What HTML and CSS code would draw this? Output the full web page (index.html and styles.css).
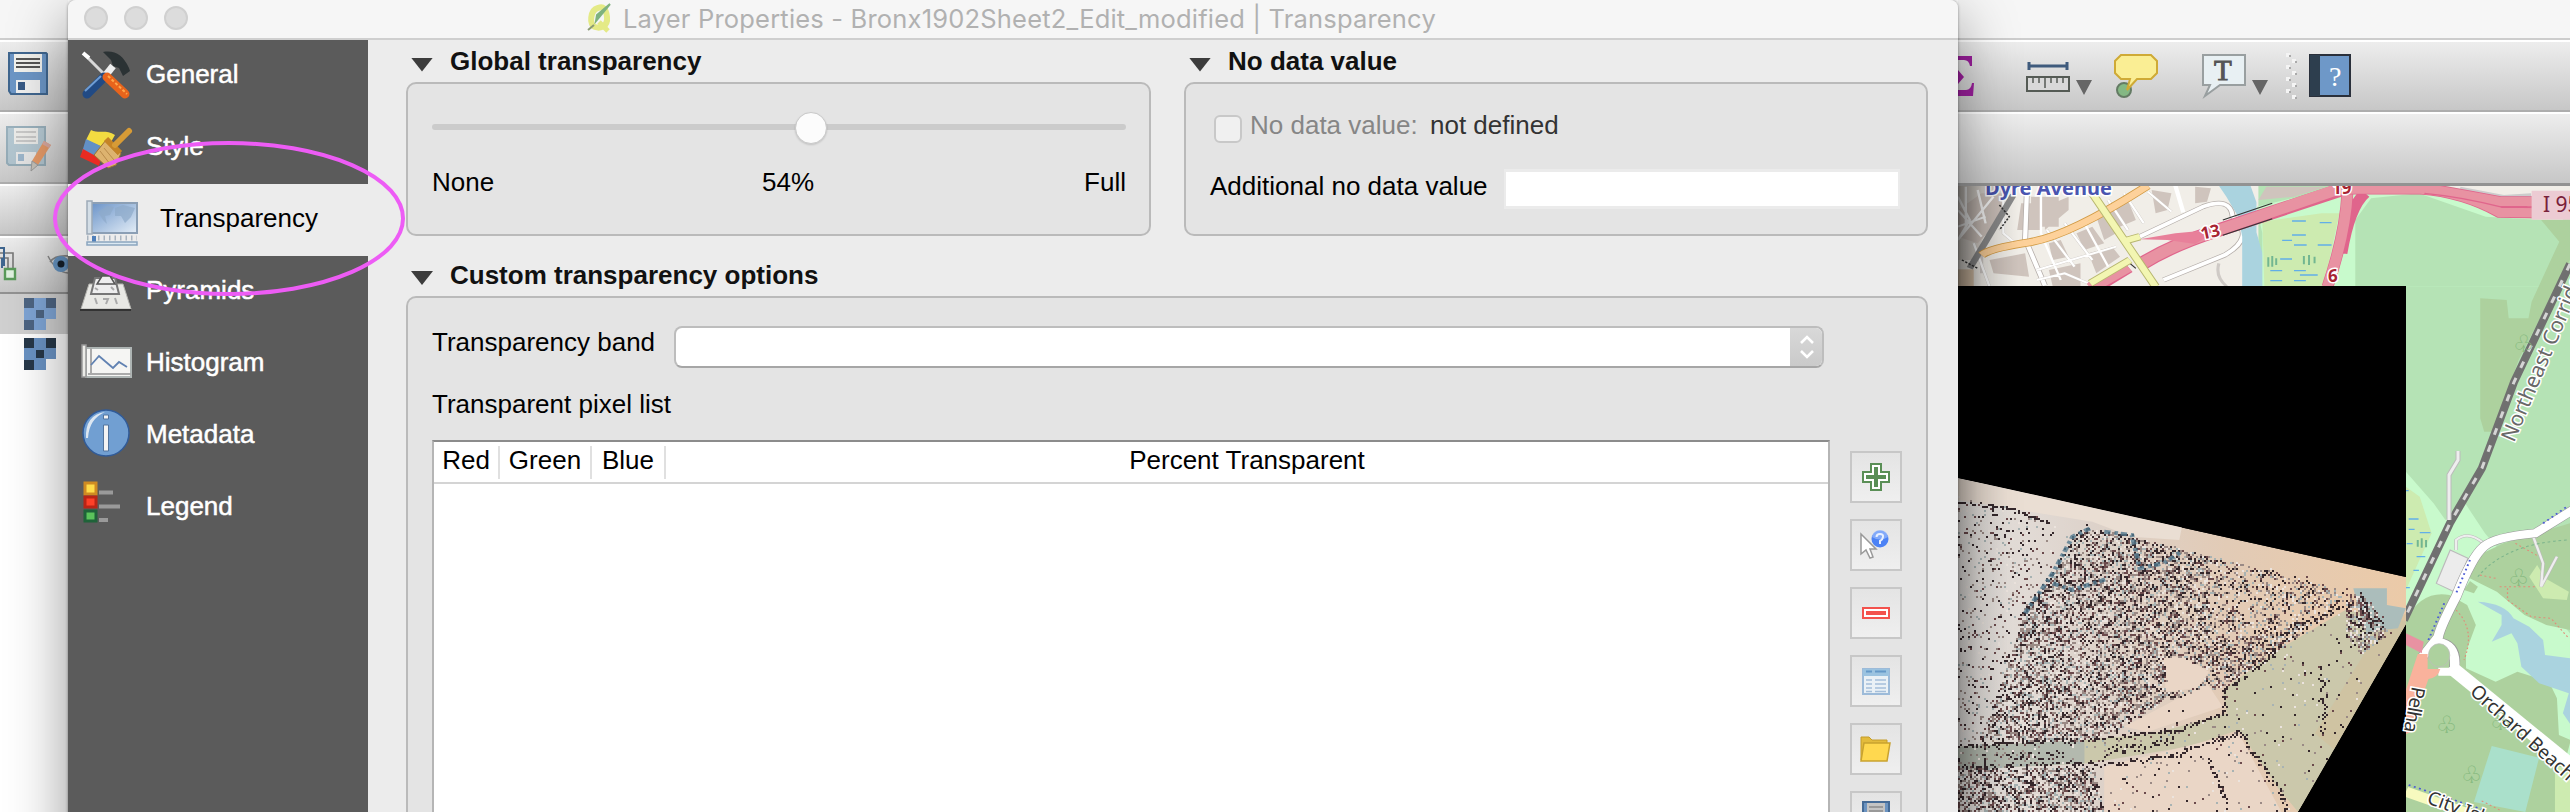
FILE: index.html
```html
<!DOCTYPE html>
<html lang="en">
<head>
<meta charset="utf-8">
<title>Layer Properties</title>
<link rel="stylesheet" href="styles.css">
</head>
<body>
<div class="desktop">
  <div class="main-left">
    <div class="strip-title"></div>
    <div class="bar">
      <svg width="68" height="70" viewBox="0 42 68 70"><path d="M9 53h37l1 1v40H11l-2-3z" fill="#6c96c6" stroke="#40668f" stroke-width="2"/><path d="M14 54h28v18H14z" fill="#f2f2ee"/><path d="M16 59h24M16 63h24M16 67h24" stroke="#555" stroke-width="2"/><path d="M16 80h24v13H16z" fill="#f0f0f0"/><path d="M18 82h7v8h-7z" fill="#385a86"/></svg>
    </div>
    <div class="bar">
      <svg width="68" height="70" viewBox="0 114 68 70"><g opacity=".65"><path d="M7 127h38v38H9l-2-2z" fill="#9fbccb" stroke="#7396a8" stroke-width="2"/><path d="M14 128h24v16H14z" fill="#f2f2ee"/><path d="M16 132h20M16 137h20M16 141h20" stroke="#aaa" stroke-width="1.5"/><path d="M16 152h20v12H16z" fill="#eee"/><path d="M18 154h6v7h-6z" fill="#7fa5c5"/></g><path d="M44 141l7 4-13 20-6-4z" fill="#e59a68"/><path d="M44 141l7 4-2 3-7-4z" fill="#d9a9a0"/><path d="M32 161l6 4-7 6z" fill="#c5c0b8" stroke="#999"/></svg>
    </div>
    <div class="bar bar-short"></div>
    <div class="bar bar-tree">
      <svg width="68" height="54" viewBox="0 238 68 54"><path d="M-4 258h12v11M0 253h13v16" fill="none" stroke="#777" stroke-width="1.6"/><path d="M-2 248h6v18M2 258v10" fill="none" stroke="#40668f" stroke-width="2"/><path d="M5 269h10v10H5z" fill="#dff0df" stroke="#5a9a5a" stroke-width="2.4"/><path d="M48 256q8 16 20 17M50 262q5-7 18-6" fill="#e5e5e5" stroke="#888" stroke-width="1.5"/><circle cx="61" cy="264" r="8" fill="#6796c4"/><circle cx="61" cy="264" r="3.5" fill="#15202c"/></svg>
    </div>
    <div class="layer selected"><svg width="32" height="32" viewBox="0 0 32 32"><path fill="#7fa5d5" d="M0 0h32v21H22v11H0z"/><path fill="#4e6583" d="M0 0h10v10H0zM22 0h10v10H22zM12 12h8v8h-8zM0 22h10v10H0z"/></svg></div>
    <div class="layer"><svg width="32" height="32" viewBox="0 0 32 32"><path fill="#6a93c4" d="M0 0h32v21H22v11H0z"/><path fill="#273849" d="M0 0h10v10H0zM22 0h10v10H22zM12 12h8v8h-8zM0 22h10v10H0z"/></svg></div>
  </div>

  <div class="dialog">
    <div class="titlebar">
      <i class="light"></i><i class="light"></i><i class="light"></i>
      <div class="title">
        <svg width="28" height="32" viewBox="0 0 28 32"><path d="M13 6C5 8 4 23 10 25s13-1 12-10S18 4 13 6z" fill="none" stroke="#e4ea86" stroke-width="6"/><path d="M14 20l9 9" stroke="#e4ea86" stroke-width="5"/><path d="M25 2L11 19l1-6z" fill="#7fb27f" stroke="#7fb27f" stroke-width="2"/><path d="M3 28l6-5" stroke="#8b9b75" stroke-width="2"/></svg>
        <span>Layer Properties - Bronx1902Sheet2_Edit_modified | Transparency</span>
      </div>
    </div>
    <div class="body">
      <div class="sidebar">
        <div class="item"><svg viewBox="0 0 72 72"><path d="M17 15l22 22" stroke="#d8d8d8" stroke-width="3"/><path d="M15 13l6 5" stroke="#fff" stroke-width="4"/><path d="M45 26L37 36" stroke="#eee" stroke-width="7"/><path d="M35 12c12-2 20 3 26 16l1 3-7 5-4-8-6-2-2-6z" fill="#2b3234"/><path d="M19 54L36 37" stroke="#214a84" stroke-width="9" stroke-linecap="round"/><path d="M17 51L33 36" stroke="#6f9dd4" stroke-width="2"/><path d="M39 37l18 17" stroke="#e8641c" stroke-width="9" stroke-linecap="round"/><path d="M40 36l19 18" stroke="#ffa74a" stroke-width="2" stroke-dasharray="3 2"/></svg><span>General</span></div>
        <div class="item"><svg viewBox="0 0 72 72"><path d="M23 18c8 4 15-1 24 5l-8 14-21-9z" fill="#f3dc41"/><path d="M18 27l19 9-7 13-16-9z" fill="#6290c5"/><path d="M15 37l18 10-2 7-19-9z" fill="#e92b22"/><path d="M38 28l15 13-5 12-8 3-14-13z" fill="#ddb36f" stroke="#9b7333"/><path d="M36 36l10 12M32 39l10 13M39 31l11 12" stroke="#b98b4a" stroke-width="1"/><path d="M38 27l14 14" stroke="#c58325" stroke-width="6"/><path d="M47 33L61 19" stroke="#d79b36" stroke-width="6" stroke-linecap="round"/></svg><span>Style</span></div>
        <div class="item active"><svg viewBox="0 0 72 72"><defs><linearGradient id="sky" x1="0" y1="0" x2="1" y2="1"><stop offset="0" stop-color="#6a93c8"/><stop offset="1" stop-color="#e4eef7"/></linearGradient></defs><path d="M23 19h46v30H23z" fill="url(#sky)" stroke="#8b9fb5" stroke-width="2"/><path d="M19 17h5v33h-5z" fill="#d4dee6" stroke="#9dabb8" stroke-width="1.5"/><path d="M30 28l9-6 7 1-4 8-5 1 2 8-4-4zM47 24l8-3 12 3-4 9-6 6-4-7-6 0z" fill="#8da9c9" opacity=".7"/><path d="M19 54h50" stroke="#a9b4bf" stroke-width="5" stroke-dasharray="1.5 4"/><path d="M24 52h4v7h-4z" fill="#4f7fb9"/><path d="M19 58h50v3H19z" fill="#dce9f2" stroke="#8ba5bf" stroke-width="1.5"/></svg><span>Transparency</span></div>
        <div class="item"><svg viewBox="0 0 72 72"><path d="M21 28h34l8 25H13z" fill="#e9e9e5" stroke="#b5b5b0"/><path d="M27 22h20l4 16H23z" fill="#eee" stroke="#777" stroke-width="2"/><path d="M34 20h8l5 8H29z" fill="#eee" stroke="#555" stroke-width="1.5"/><path d="M27 42l2 6M35 43h5l-2 5M47 42l2 6M27 32l3 2M43 31l3 3" fill="none" stroke="#aaa" stroke-width="2"/><path d="M12 54h51" stroke="#333" stroke-width="2"/></svg><span>Pyramids</span></div>
        <div class="item"><svg viewBox="0 0 72 72"><path d="M18 20h45v29H18z" fill="#f5f5f3" stroke="#aeb5b4" stroke-width="2"/><path d="M14 17h4v32h-4z" fill="#ecece8" stroke="#999" stroke-width="1.5"/><path d="M20 46h43M23 20v26" stroke="#aaa" stroke-width="2"/><path d="M23 37l8-9 7 6 7 6 6-6 8 5" fill="none" stroke="#6182b2" stroke-width="1.8"/></svg><span>Histogram</span></div>
        <div class="item"><svg viewBox="0 0 72 72"><circle cx="38" cy="33" r="23" fill="#719fd2" stroke="#315b98" stroke-width="1.5"/><path d="M18 38Q17 15 37 12q-16 7-17 26z" fill="#dde7f1"/><path d="M35.500 15h5v4h-5zM35.500 25h5v26h-5z" fill="#f3f3f3" stroke="#52749e"/></svg><span>Metadata</span></div>
        <div class="item"><svg viewBox="0 0 72 72"><path d="M17 11h11v11H17z" fill="#ffdc49" stroke="#cf8b22" stroke-width="3"/><path d="M17 25h11v10H17z" fill="#ff4028" stroke="#ba2416" stroke-width="3"/><path d="M17 39h11v10H17z" fill="#5bc45b" stroke="#1f6339" stroke-width="3"/><path d="M31 20.500h14M31 34.500h21M31 48h9" stroke="#9a9a9a" stroke-width="4"/></svg><span>Legend</span></div>
      </div>
      <div class="content">
        <div class="top-row">
          <section class="global">
            <h2><i class="tri"></i>Global transparency</h2>
            <div class="group">
              <div class="track"><i class="knob"></i></div>
              <div class="labels"><span>None</span><span class="pct">54%</span><span>Full</span></div>
            </div>
          </section>
          <section class="nodata">
            <h2><i class="tri"></i>No data value</h2>
            <div class="group">
              <div class="check-row"><i class="check"></i><span class="dim">No data value:</span><span class="def">not defined</span></div>
              <div class="add-row"><span>Additional no data value</span><i class="field"></i></div>
            </div>
          </section>
        </div>
        <section class="custom">
          <h2><i class="tri"></i>Custom transparency options</h2>
          <div class="group">
            <div class="band"><span>Transparency band</span>
              <div class="combo"><svg width="34" height="42" viewBox="0 0 34 42"><path d="M11 17l6-6 6 6M11 25l6 6 6-6" fill="none" stroke="#fff" stroke-width="2.600"/></svg></div>
            </div>
            <div class="list-label">Transparent pixel list</div>
            <div class="list-row">
              <div class="table">
                <div class="thead"><span class="c1">Red</span><span class="c2">Green</span><span class="c3">Blue</span><span class="c4">Percent Transparent</span></div>
              </div>
              <div class="tools">
                <div class="tool"><svg viewBox="0 0 48 48"><path d="M19 11h10v8h8v10h-8v8H19v-8h-8V19h8z" fill="#fff" stroke="#5a8f56" stroke-width="2"/><path d="M24 14v20M14 24h20" stroke="#5a8f56" stroke-width="4"/></svg></div>
                <div class="tool"><svg viewBox="0 0 48 48"><circle cx="28" cy="18" r="8.500" fill="#4c82f5"/><path d="M20 16a8 7 0 0 1 16 0q-8 5-16 0z" fill="#a9c4fb" opacity=".6"/><path d="M24.500 16q0-3 3.500-3t3 3-3 4v3" fill="none" stroke="#e8f0ff" stroke-width="2"/><path d="M9 13v20l5-4 4 8 3-1-3-8h6z" fill="#fff" stroke="#999" stroke-width="1.500"/></svg></div>
                <div class="tool"><svg viewBox="0 0 48 48"><path d="M11 19h26v10H11z" fill="#fff" stroke="#f3524d" stroke-width="2"/><path d="M14 24h20" stroke="#f3524d" stroke-width="4"/></svg></div>
                <div class="tool"><svg viewBox="0 0 48 48"><path d="M11 12h26v25H11z" fill="#eaf1f6" stroke="#9dbbd9" stroke-width="2"/><path d="M11 12h26v7H11z" fill="#9bc3e0"/><path d="M14 14.500h6M23 14.500h11" stroke="#6599c8" stroke-width="2"/><path d="M14 23h6M23 23h11M14 27h6M23 27h11M14 31h6M23 31h11M14 34.500h6M23 34.500h11" stroke="#a5bfda" stroke-width="1.600"/></svg></div>
                <div class="tool"><svg viewBox="0 0 48 48"><path d="M9 35V12h8l3 3h15v20z" fill="#e3bb3c" stroke="#c49c2a"/><path d="M12 18h26l-3 18H9z" fill="#ffd84f" stroke="#c9a22f" stroke-width="1.500"/></svg></div>
                <div class="tool"><svg viewBox="0 0 48 48"><path d="M11 9h26v28H11z" fill="#6b93c0" stroke="#456b96" stroke-width="2"/><path d="M15 10h18v12H15z" fill="#c4c4c4"/><path d="M17 14h14M17 18h14" stroke="#999" stroke-width="2"/></svg></div>
              </div>
            </div>
          </div>
        </section>
      </div>
    </div>
  </div>

  <div class="main-right">
    <div class="strip-title"></div>
    <div class="bar">
      <svg width="612" height="70" viewBox="1958 42 612 70">
        <path d="M1958 56h14v10h-2q-1-6-6-6h-6zM1958 70l6 7-6 7zM1958 90h8q5 0 6-7h2l-1 13h-15z" fill="#9b1f9c"/>
        <path d="M2029 66h38M2029 62v8M2067 62v8" stroke="#3f5b7d" stroke-width="3"/><path d="M2027 77h42v14h-42z" fill="#d9d9d9" stroke="#555b55" stroke-width="2"/><path d="M2033 78v5M2039 78v5M2045 78v10M2051 78v5M2057 78v5M2063 78v5" stroke="#555b55" stroke-width="1.500"/>
        <path d="M2076 80h16l-8 15zM2252 80h16l-8 15z" fill="#666"/>
        <circle cx="2124" cy="90" r="7" fill="#84b884" stroke="#647b64" stroke-width="2"/><path d="M2121 55h30l6 6v12l-6 6h-14l-10 11 3-11h-9l-6-6V61z" fill="#faee94" stroke="#cfaa36" stroke-width="2"/>
        <path d="M2203 55h42v30h-25l-15 11 5-11h-7z" fill="#e8f0f3" stroke="#999fa0" stroke-width="2"/><text x="2214" y="80" class="serif-t">T</text>
        <path d="M2288 53v46M2294 59v40" stroke="#f4f4f4" stroke-width="4" stroke-dasharray="4 8"/><path d="M2290 55v44M2296 61v38" stroke="#aaa" stroke-width="2" stroke-dasharray="2 10"/>
        <path d="M2310 55h40v41h-40z" fill="#6e98c8" stroke="#2a303b" stroke-width="2"/><path d="M2310 55h10v41h-10z" fill="#2d3e4e"/><text x="2329" y="86" class="serif-q">?</text>
      </svg>
    </div>
    <div class="bar bar-last"></div>
    <svg class="map" width="612" height="626" viewBox="0 0 612 626">
      <rect width="612" height="626" fill="#b5e3b5"/>
      <!-- street grid and parkway, north side -->
      <g transform="matrix(.3954 0 0 .3333 -8 -6)">
        <path d="M20 17H780V320H20z" fill="#f1eee8"/>
        <path d="M20 17h120L60 240H20z" fill="#dad4cd"/>
        <path d="M80 40l60 0-20 90-50 60-50-20V90zM180 70h50v80h-60zM205 50h70v90h-70zM100 240l90-20 10 70-90-10zM240 80l60-30v40l-60 60zM250 190l30-10 20 50-40 10zM320 160l40-20 30 50-50 20zM400 80l50-20 20 60-60 30zM510 30l50 10-10 50-30 10zM250 270l80-20v70h-70zM350 220l60-20 20 30-60 50zM370 110l30 0 20 50-30 20zM620 20l40 5-10 40-30 5zM800 20h150l-80 30-90 10z" fill="#cfc4bd"/>
        <g fill="none" stroke="#b5aeaa" stroke-width="15"><path d="M195 17l-5 160 50 140M480 170l160-90q70-30 75 30 60 60-20 115L540 300"/></g>
        <g fill="none" stroke="#fff" stroke-width="11"><path d="M195 17l-5 160 50 140M480 170l160-90q70-30 75 30 60 60-20 115L540 300M570 17l20 80"/></g>
        <g fill="none" stroke="#cfcac6" stroke-width="8"><path d="M135 40v120l30 30M245 150l70 110M290 130l70 110M400 60l50 90M440 40l50 90M500 35l60 60M60 190l40 130M220 270l200-70M220 300l70-20 60 30M80 280V220M680 250q-10 40 20 70"/></g>
        <g fill="none" stroke="#fff" stroke-width="6"><path d="M135 40v120l30 30M230 40v120l50 140M245 150l70 110M290 130l70 110M20 180l90-130M20 90l60 80M70 30l20 100M20 50l30 70-30 60M40 20v120M20 140l70-30M320 17l40 30M400 60l50 90M440 40l50 90M500 35l60 60M60 190l40 130M220 270l200-70M220 300l70-20 60 30M340 130l60 130"/></g>
        <path d="M20 268h40v52H20z" fill="#dfc9af"/>
        <path d="M160 45L50 265" stroke="#8c8c8c" stroke-width="17"/><path d="M125 75l25 35-25 40M30 240l40 25" fill="none" stroke="#333" stroke-width="4" stroke-dasharray="6 4"/>
        <path d="M80 225q20-20 120-38T500 17" fill="none" stroke="#d19a43" stroke-width="24"/><path d="M80 225q20-20 120-38T500 17" fill="none" stroke="#fdd19a" stroke-width="19"/>
        <path d="M680 17h80l15 50 0 90 20 83V320h-56V170l-10-60-30-60z" fill="#aad3df"/>
        <path d="M775 80L1000 17h250l300 60v243H790V160z" fill="#c8facc"/>
        <path d="M790 125l150-25h45l-40 220H795z" fill="#cdebb0"/>
        <g stroke="#62aee8" stroke-width="4"><path d="M865 123h35M935 128h30M865 165h35M840 181h25M870 195h32M930 195h35M835 237h30M810 272h30M870 272h30M885 285h45M810 302h30M870 302h30"/></g>
        <path d="M805 232v28M815 228v32M825 235v20M895 228v25M908 225v30M922 230v20" stroke="#72b691" stroke-width="5"/>
        <path d="M360 325L450 260M480 255Q560 195 680 150L1000 25" fill="none" stroke="#e0658c" stroke-width="40"/>
        <path d="M355 325L450 260M480 255Q560 195 680 150L1000 20" fill="none" stroke="#e892a2" stroke-width="33"/>
        <path d="M480 178l90-18 110-12-60 44-70-12z" fill="#e8809a"/>
        <path d="M690 120l125-50M690 166l125-50M455 250l15 15" fill="none" stroke="#333" stroke-width="3"/>
        <path d="M360 40L520 320M355 310l100-70M435 185l45-15" stroke="#b8b770" stroke-width="22"/><path d="M360 40L520 320M355 310l100-70M435 185l45-15" stroke="#f3f6b2" stroke-width="17"/>
        <path d="M1025 320V120l40-65 120-15 170 70 213 15V320z" fill="#b5e3b5"/>
        <path d="M1250 17h318v60l-170-25z" fill="#f1eee8"/><path d="M1290 25l110 25 70-5" stroke="#ccc" stroke-width="10" fill="none"/>
        <path d="M1005 40Q1000 160 955 320M1050 40q-40 40-60 180" fill="none" stroke="#e0658c" stroke-width="30"/><path d="M1005 40Q1000 160 955 320" fill="none" stroke="#e892a2" stroke-width="27"/>
        <path d="M980 27h210q110 10 200 70l180 3M1180 20q100 20 210 45h180" fill="none" stroke="#e0658c" stroke-width="33"/><path d="M980 27h210q110 10 200 70l180 3M1180 20q100 20 210 45h180" fill="none" stroke="#e892a2" stroke-width="28"/>
        <path d="M1200 40q90 10 190 40h70" fill="none" stroke="#e0658c" stroke-width="4"/>
        <path d="M1495 120h73v120l-130 300-65 215h-22l-10-40V355l67 5 5 55h50l8-50 70-180z" fill="#add19e"/>
        <path d="M1471 32h100v87h-100z" fill="#eccbd3"/>
      </g>
      <!-- park, creek and roads, east side -->
      <g transform="matrix(.3954 0 0 .3333 -8 284)">
        <path d="M1153 5l70 95 30 50 50-50 50 90 215 300v536H1153z" fill="#c8facc"/>
        <path d="M1153 50l35 30 30 110-65 170z" fill="#cdebb0"/>
        <path d="M1160 147h25M1160 62h-10M1188 188h27M1160 178h15M1155 221h15M1180 260h22M1172 301h14M1153 353h10" stroke="#62aee8" stroke-width="4"/>
        <path d="M1183 210v20M1193 205v28M1204 210v22" stroke="#72b691" stroke-width="5"/>
        <path d="M1400 220l168-60V480l-60-15-55-30-70-70-85-50 40-60z" fill="#add19e"/>
        <path d="M1153 450q40-90 110-75l45 30 22 60-25 80 0 50 75 40 55-30 80 30 20 50 5 110 30 15-20 90v126H1153z" fill="#add19e"/>
        <path d="M1335 395q70 5 90 50l40 25 35 40 5 45 65 10v200l-20-35 15-60-75-30-45-50-10-70-15-30-50 25 25-50v-30z" fill="#aad3df"/>
        <path d="M1300 360l15-27 20 17-10 20z" fill="#add19e"/>
        <path d="M1465 320l20-35 20 40 60 40-5 25-60-5zM1530 890h38v136h-38z" fill="#cdebb0"/>
        <path d="M1370 828l120 35-35 163-130-30z" fill="#aae0cb"/>
        <path d="M1475 200l25 80-5 70 40-90M1280 240v-30q30-30 70 10" fill="none" stroke="#bbb" stroke-width="9"/><path d="M1475 200l25 80-5 70 40-90M1280 240v-30q30-30 70 10" fill="none" stroke="#eee" stroke-width="6"/>
        <path d="M1265 240l45 25-35 100-45-25z" fill="#ececec" stroke="#bbb" stroke-width="3"/>
        <path d="M1390 350h90M1340 315l40 10M1410 355v35l60 50 50 5 45 60M1280 420q50 60 20 150M1430 220l60 40M1390 1020l-50-30" fill="none" stroke="#e18c78" stroke-width="3" stroke-dasharray="5 7"/>
        <path d="M1335 320q70-100 230-110" fill="none" stroke="#7cb48c" stroke-width="3" stroke-dasharray="7 7"/>
        <path d="M1575 120L1480 190Q1380 200 1350 230T1280 380Q1240 470 1235 500L1195 560M1235 515q50 10 40 80" fill="none" stroke="#999" stroke-width="27"/>
        <path d="M1265 590l310 300" stroke="#fff" stroke-width="38"/>
        <path d="M1575 120L1480 190Q1380 200 1350 230T1280 380Q1240 470 1235 500L1195 560M1235 515q50 10 40 90h-40" fill="none" stroke="#fff" stroke-width="24"/>
        <ellipse cx="1237" cy="556" rx="27" ry="35" fill="#add19e" stroke="#bbb" stroke-width="2"/>
        <path d="M1153 490l45 25-5 35-40-25z" fill="#e892a2"/>
        <path d="M1183 552h25v45h32q-5 25-30 30-15 50-45 160l-12 5V660z" fill="#f9b29c"/>
        <path d="M1153 965l170 71" stroke="#f7fabf" stroke-width="30"/><path d="M1160 945l190 75M1315 270l-35 100M1250 400l-40 110M1500 160l60-50" stroke="#4b5bd5" stroke-width="5" stroke-dasharray="5 9"/>
      </g>
      <path d="M612 78L556 196 524 282 492 337 446 434" fill="none" stroke="#707070" stroke-width="8"/><path d="M612 78L556 196 524 282 492 337 446 434" fill="none" stroke="#d5d5d5" stroke-width="3" stroke-dasharray="7 11"/>
      <path d="M500 265v9l-9 15v45" fill="none" stroke="#bbb" stroke-width="5"/><path d="M500 265v9l-9 15v45" fill="none" stroke="#eee" stroke-width="3"/>
      <path d="M0 100H448V626H0z"/>
      <defs>
        <linearGradient id="paper"><stop offset="0" stop-color="#e6e3e0"/><stop offset=".3" stop-color="#ddd2ca"/><stop offset=".6" stop-color="#e2cbb6"/><stop offset="1" stop-color="#ebcaa8"/></linearGradient>
        <linearGradient id="edge"><stop offset="0" stop-opacity=".4"/><stop offset=".4" stop-opacity=".13"/><stop offset="1" stop-opacity="0"/></linearGradient>
        <clipPath id="sheet"><path d="M0 292L448 391V438L340 626H0z"/></clipPath>
      </defs>
      <g clip-path="url(#sheet)">
        <path d="M0 292L448 391V438L340 626H0z" fill="url(#paper)"/>
        <g transform="matrix(.3954 0 0 .3333 -8 284)">
          <path d="M20 25l570 125-10 60-120-10-100-45L20 90z" fill="#eaded3"/>
          <path d="M1000 420L830 540 690 660l10 70L520 790 340 810 20 830v70l330-20 250-50 130-50 100 175 50 70 330-560z" fill="#cbc8ab"/>
          <path d="M1080 490l73-60v120l-180 290-50-50z" fill="#d2bf9c" opacity=".6"/>
          <path d="M20 830l320-20v70L20 900z" fill="#b3b9ae"/>
          <path d="M540 560h50l65 45-30 50-80 10zM440 770l210-130 40 70-190 75zM390 890l340-100 110 240H390z" fill="#ead6c6"/>
          <path d="M1020 355h85v50l48 10-20 60-80 10-20-70z" fill="#abbdbb"/>
        </g>
        <g id="ink"></g>
        <path transform="matrix(.3954 0 0 .3333 -8 284)" d="M190 430l70-120 50-110 50-28M390 185l70 10 20 100 60-15 45-35M260 340l50 20 90-35" fill="none" stroke="#52798e" stroke-width="12" stroke-dasharray="16 10 9 7" opacity=".8"/>
      </g>
      <text class="dyre" x="27" y="9">Dyre Avenue</text>
      <g class="shield"><text x="243" y="52" transform="rotate(-12 252 48)">13</text><text x="374" y="8">19</text><text x="370" y="96">6</text></g>
      <text class="i95" x="585" y="26">I 95</text>
      <text class="rail" transform="translate(556 257) rotate(-67)">Northeast Corridor</text>
      <text class="road" transform="translate(511 507) rotate(42)">Orchard Beach Road</text>
      <text class="road" transform="translate(454 500) rotate(100)" textLength="46">Pelha</text>
      <text class="road" transform="translate(468 617) rotate(20)">City Isla</text>
      <g class="trees"><text x="555" y="166">♧</text><text x="550" y="400">♧</text><text x="478" y="547">♧</text><text x="532" y="544">♧</text><text x="503" y="597">♧</text></g>
      <path d="M0 0h60v100H0z" fill="url(#edge)"/><path d="M0 290h50v336H0z" fill="url(#edge)" opacity=".5"/>
    </svg>
  </div>
  <svg class="callout" width="360" height="164" viewBox="49 137 360 164"><ellipse cx="229" cy="218.500" rx="174" ry="75.500" fill="none" stroke="#ed5cf5" stroke-width="4"/></svg>
</div>
<script src="ink.js"></script>
</body>
</html>
```

FILE: styles.css
```css
* { box-sizing: border-box; }
body { margin: 0; overflow: hidden; font: 26px/30px "Liberation Sans", Arial, sans-serif; color: #000; }
.desktop { position: relative; display: flex; width: 2570px; height: 812px; overflow: hidden; background: #fff; }
.main-left { width: 68px; flex: none; background: #fff; }
.main-right { width: 612px; flex: none; overflow: hidden; }
svg { display: block; flex: none; }
.strip-title { height: 40px; background: #f6f6f6; border-bottom: 2px solid #cdcdcd; }
.bar { height: 72px; border-top: 2px solid #fff; border-bottom: 2px solid #adadad; background: linear-gradient(#ededed, #c7c7c7); }
.bar svg { margin-bottom: -4px; }
.bar-short { height: 52px; }
.bar-tree { height: 58px; border-bottom-color: #929292; }
.bar-last { height: 74px; border-bottom: 3px solid #929292; }
.layer { height: 40px; padding: 4px 0 0 24px; }
.layer.selected { background: #d0d0d0; }

.dialog { position: relative; z-index: 1; width: 1890px; height: 860px; flex: none; display: flex; flex-direction: column; background: #ececec; border-radius: 8px 8px 0 0; box-shadow: 0 0 3px rgba(0,0,0,.4), 0 20px 60px rgba(0,0,0,.42); }
.titlebar { position: relative; height: 40px; flex: none; display: flex; gap: 16px; padding: 6px 16px; background: #f6f6f6; border-bottom: 2px solid #cfcfcf; border-radius: 8px 8px 0 0; }
.light { width: 24px; height: 24px; border-radius: 50%; background: #dcdcdc; border: 2px solid #d0d0d0; }
.title { display: flex; gap: 10px; margin: -4px 0 0 381px; height: 32px; color: #b1b1b1; font: 25.500px/34px Inter, sans-serif; letter-spacing: .19px; white-space: nowrap; }
.body { display: flex; flex: 1; }
.sidebar { width: 300px; background: #5b5b5b; }
.item { height: 72px; display: flex; align-items: center; color: #fff; -webkit-text-stroke: .5px; }
.item svg { width: 72px; height: 72px; margin-right: 6px; }
.item span { padding-bottom: 4px; }
.item.active { background: #ececec; color: #000; -webkit-text-stroke: 0; }
.item.active svg { margin-right: 20px; }

.content { flex: 1; padding: 6px 30px 0 38px; }
.top-row { display: flex; gap: 33px; }
.global { width: 745px; }
.nodata { width: 744px; }
h2 { display: flex; align-items: center; height: 36px; margin: 0; padding: 0 0 6px 5px; font-size: 26px; line-height: 30px; font-weight: bold; color: #111; }
.tri { width: 22px; height: 14px; margin: 7px 17px 0 0; background: #3c3c3c; clip-path: polygon(0 0, 100% 0, 50% 100%); }
.group { border: 2px solid #bababa; border-radius: 10px; background: #e4e4e4; }
.top-row .group { height: 154px; }
.global .group { padding: 40px 23px 0 24px; }
.track { position: relative; height: 6px; border-radius: 3px; background: #cbcbcb; }
.knob { position: absolute; left: 363px; top: -12px; width: 32px; height: 32px; border-radius: 50%; background: #fcfcfc; border: 1px solid #c9c9c9; box-shadow: 0 1px 2px rgba(0,0,0,.15); }
.labels { display: flex; justify-content: space-between; padding-top: 37px; }
.labels .pct { margin-right: 2px; }
.nodata .group { padding: 26px 27px 0 24px; }
.check-row { display: flex; align-items: center; height: 34px; padding-left: 4px; }
.check { width: 28px; height: 28px; margin: 4px 8px 0 0; border: 2px solid #c8c8c8; border-radius: 6px; background: #f0f0f0; }
.dim { color: #868686; width: 180px; }
.check-row span { padding-bottom: 4px; }
.def { color: #333; }
.add-row { display: flex; justify-content: space-between; margin-top: 25px; }
.add-row span { padding-top: 2px; }
.field { width: 396px; height: 40px; background: #fff; border: 3px solid #ebebeb; border-width: 3px 2px; margin-right: -1px; }
.custom { margin-top: 23px; }
.custom h2 { height: 37px; padding-bottom: 6px; }
.custom .group { height: 600px; padding: 28px 24px; border-bottom: 0; border-radius: 10px 10px 0 0; }
.band { display: flex; justify-content: space-between; height: 42px; padding-right: 78px; }
.combo { width: 1150px; height: 42px; display: flex; justify-content: flex-end; background: #fff; border: 2px solid #bdbdbd; border-bottom-color: #a6a6a6; border-radius: 8px; overflow: hidden; }
.combo svg { background: linear-gradient(#d9d9d9, #c9c9c9); margin-top: -2px; margin-right: -2px; }
.band span { padding-top: 1px; }
.list-label { padding-top: 21px; height: 72px; }
.list-row { display: flex; gap: 20px; }
.table { width: 1398px; height: 500px; background: #fff; border: 2px solid #b5b5b5; border-top-color: #8c8c8c; }
.thead { height: 42px; display: flex; padding-top: 4px; border-bottom: 2px solid #d4d4d4; }
.thead span { height: 33px; line-height: 28px; text-align: center; border-right: 2px solid #e0e0e0; }
.thead .c1 { width: 66px; } .thead .c2 { width: 92px; } .thead .c3 { width: 74px; }
.thead .c4 { flex: 1; border: 0; }
.tools { display: flex; flex-direction: column; gap: 16px; padding-top: 11px; }
.tool { width: 52px; height: 52px; flex: none; border: 2px solid #c7c7c7; background: linear-gradient(#e4e4e4, #efefef); }
.callout { position: absolute; left: 49px; top: 137px; z-index: 2; }

.serif-t { font: 29px "Liberation Serif", serif; fill: #555; stroke: #555; }
.serif-q { font: 28px "Liberation Serif", serif; fill: #fff; }
.dyre { font: bold 20px "Noto Sans", sans-serif; fill: #4a55b0; stroke: #fff; stroke-width: 3px; paint-order: stroke; }
.shield { font: bold 17px "Noto Sans", sans-serif; fill: #a82432; stroke: #fff; stroke-width: 3px; paint-order: stroke; }
.i95 { font: 21px "Noto Sans", sans-serif; fill: #79213a; }
.rail { font: 21px "Noto Sans", sans-serif; fill: #686868; stroke: #fff; stroke-width: 3px; paint-order: stroke; }
.road { font: 19px "Noto Sans", sans-serif; fill: #333; stroke: #fff; stroke-width: 3px; paint-order: stroke; }
.trees { font: 24px "DejaVu Sans", sans-serif; fill: #82b77c; }
```

FILE: ink.js
```js
// Scatters the scanned sheet's printed linework as small ink cells.
var seed = 7;
function rnd() { seed = (seed * 16807) % 2147483647; return seed / 2147483647; }
function inside(x, y, p) {
  var hit = false;
  for (var i = 0, j = p.length - 1; i < p.length; j = i++) {
    if ((p[i][1] > y) !== (p[j][1] > y) &&
        x < (p[j][0] - p[i][0]) * (y - p[i][1]) / (p[j][1] - p[i][1]) + p[i][0]) hit = !hit;
  }
  return hit;
}
function toMap(list) { return list.map(function (q) { return [q[0] * .3954 - 8, q[1] / 3 + 284]; }); }
var sheet = toMap([[20, 75], [340, 165], [1000, 345], [1080, 400], [1120, 490], [880, 1026], [20, 1026]]);
var hills = toMap([[340, 180], [460, 200], [740, 280], [1000, 360], [960, 430], [790, 570], [690, 650], [540, 690], [420, 780], [330, 810], [70, 815], [140, 600], [190, 420], [260, 310]]);
var swamp = toMap([[20, 890], [360, 890], [390, 1026], [20, 1026]]);
var corner = toMap([[1000, 370], [1050, 370], [1110, 490], [1040, 550], [1000, 500]]);
var clearings = [toMap([[540, 560], [590, 560], [655, 605], [625, 650], [545, 665]]), toMap([[440, 770], [650, 640], [690, 710], [500, 785]])];
var tones = { '#35282c': '', '#6b4a4c': '', '#9a8a85': '', '#a8b3b3': '', '#ece4de': '' };
var keys = Object.keys(tones);
for (var y = 300; y < 626; y += 2) {
  for (var x = 0; x < 446; x += 2) {
    if (!inside(x, y, sheet)) continue;
    var d = x < 80 ? .12 : .035;
    if (inside(x, y, hills)) {
      var wave = Math.sin((x * .55 + y * 1.0 + 9 * Math.sin(x / 19) + 8 * Math.sin(y / 15)) * 1.05);
      d = wave > .15 ? .74 : .42;
      if (x > 250 && y < 450) d *= .6;
    } else if (inside(x, y, swamp) || inside(x, y, corner)) d = .6;
    if (inside(x, y, clearings[0]) || inside(x, y, clearings[1])) d = .01;
    if (rnd() < d) {
      var r = rnd();
      tones[keys[r < .24 ? 0 : r < .42 ? 1 : r < .7 ? 2 : r < .86 ? 3 : 4]] += 'M' + x + ' ' + y + 'h2v2h-2z';
    }
  }
}
function line(pts, w) {
  var p = toMap(pts);
  for (var i = 1; i < p.length; i++) {
    var n = Math.hypot(p[i][0] - p[i - 1][0], p[i][1] - p[i - 1][1]) / 1.4;
    for (var k = 0; k < n; k++) {
      if (rnd() < .2) continue;
      var a = Math.round((p[i - 1][0] + (p[i][0] - p[i - 1][0]) * k / n + (rnd() - .5) * w) / 2) * 2;
      var b = Math.round((p[i - 1][1] + (p[i][1] - p[i - 1][1]) * k / n + (rnd() - .5) * w) / 2) * 2;
      tones['#35282c'] += 'M' + a + ' ' + b + 'h2v2h-2z';
    }
  }
}
line([[20, 95], [140, 110], [250, 155]], 3);
line([[180, 440], [240, 350], [300, 230], [350, 170]], 7);
line([[380, 185], [460, 200], [480, 300], [580, 240]], 4);
line([[260, 340], [310, 360], [400, 320]], 4);
line([[980, 415], [860, 490], [780, 590], [690, 660], [695, 725], [580, 775], [380, 805], [20, 825]], 4);
line([[20, 890], [270, 880], [420, 880], [560, 855], [730, 785], [830, 960], [850, 1026]], 5);
line([[930, 430], [820, 500]], 4);
line([[1040, 370], [1060, 450], [1110, 485]], 6);
line([[80, 815], [90, 900], [140, 960]], 3);
line([[210, 920], [100, 1020]], 8);
line([[755, 295], [830, 310]], 4);
line([[945, 590], [942, 780]], 9);
line([[400, 845], [560, 805]], 8);
line([[140, 860], [290, 850]], 8);
line([[650, 860], [700, 1000]], 5);
document.getElementById('ink').innerHTML = keys.map(function (c) { return '<path fill="' + c + '" d="' + tones[c] + '"/>'; }).join('');
```
